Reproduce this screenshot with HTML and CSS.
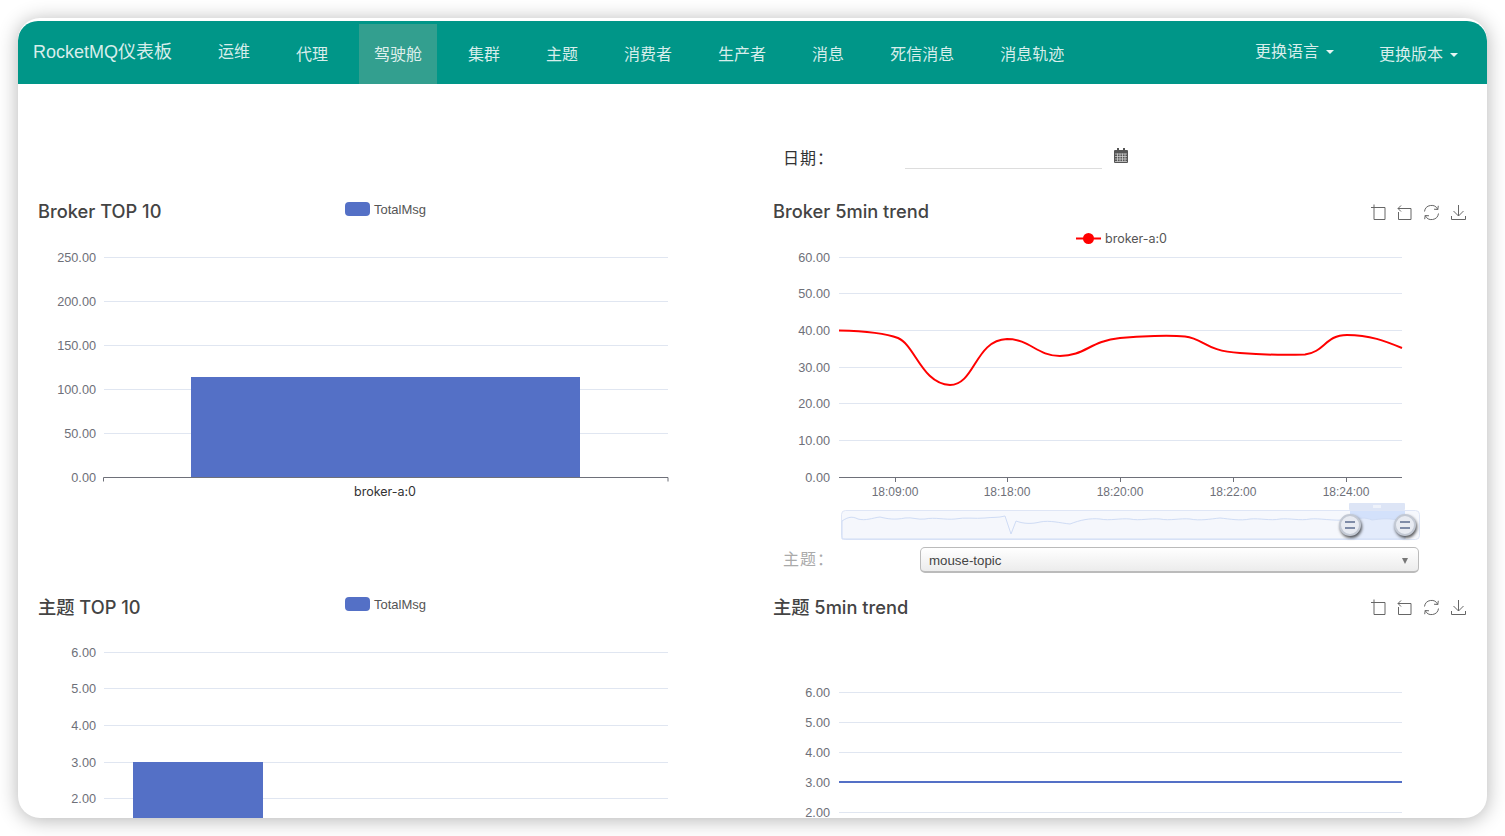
FILE: index.html
```html
<!DOCTYPE html>
<html lang="zh-CN">
<head>
<meta charset="utf-8">
<title>RocketMQ仪表板</title>
<link rel="stylesheet" href="styles.css">
</head>
<body>
<div class="window">
  <nav class="nav">
    <a class="brand raised">RocketMQ仪表板</a>
    <ul class="menu">
      <li class="raised">运维</li>
      <li>代理</li>
      <li class="active">驾驶舱</li>
      <li>集群</li>
      <li>主题</li>
      <li>消费者</li>
      <li>生产者</li>
      <li>消息</li>
      <li>死信消息</li>
      <li>消息轨迹</li>
    </ul>
    <ul class="menu menu-right">
      <li class="raised">更换语言<span class="caret"></span></li>
      <li>更换版本<span class="caret"></span></li>
    </ul>
  </nav>

  <main class="content">
    <div class="date-row">
      <label class="date-label">日期：</label>
      <div class="date-input"></div>
      <svg class="calendar" width="14" height="15" viewBox="0 0 14 15">
        <rect x="0" y="2" width="14" height="13" rx="1" fill="#555"/>
        <rect x="3" y="0" width="2" height="3" fill="#555"/>
        <rect x="9" y="0" width="2" height="3" fill="#555"/>
        <path d="M1 6h12M1 8.500h12M1 11h12M1 13.500h12M3.500 5.500v8M6 5.500v8M8.500 5.500v8M11 5.500v8" stroke="#ddd" stroke-width=".7" fill="none"/>
      </svg>
    </div>

    <div class="charts">
      <section class="panel">
        <header class="panel-head">
          <h4 class="panel-title">Broker TOP 10</h4>
          <div class="legend"><i class="swatch"></i>TotalMsg</div>
        </header>
        <svg class="chart chart-left" width="735" height="372" viewBox="18 223 735 372">
          <g class="grid">
            <path d="M104 257.500H668M104 301.500H668M104 345.500H668M104 389.500H668M104 433.500H668"/>
          </g>
          <g class="ylabels">
            <text x="96" y="262">250.00</text>
            <text x="96" y="306">200.00</text>
            <text x="96" y="350">150.00</text>
            <text x="96" y="394">100.00</text>
            <text x="96" y="438">50.00</text>
            <text x="96" y="482">0.00</text>
          </g>
          <rect class="bar" x="191" y="377" width="389" height="100"/>
          <path class="axis" d="M103.500 481.500V477.500H668V481.500"/>
          <text class="xlabel dark" x="385" y="496">broker-a:0</text>
        </svg>
      </section>

      <section class="panel">
        <header class="panel-head">
          <h4 class="panel-title">Broker 5min trend</h4>
          <div class="toolbox">
            <svg width="17" height="17" viewBox="0 0 17 17"><path d="M2 3.500H16V15.500H5V.5"/></svg>
            <svg width="17" height="17" viewBox="0 0 17 17"><path d="M2 4.500H15V15.500H2.500V8M5 1.500L2 4.500L5 7.500"/></svg>
            <svg width="17" height="17" viewBox="0 0 17 17"><path d="M1.500 7.500A7 7 0 0 1 14.800 5.500M14.800 5.500L15.300 1.800M14.800 5.500L11 5.200M15.500 9.500A7 7 0 0 1 2.200 11.500M2.200 11.500L1.700 15.200M2.200 11.500L6 11.800"/></svg>
            <svg width="17" height="17" viewBox="0 0 17 17"><path d="M8.500 1V12M3.500 7L8.500 12L13.500 7M1.500 12V15.500H15.500V12"/></svg>
          </div>
        </header>
        <svg class="chart chart-right" width="734" height="323" viewBox="753 223 734 323">
          <g class="legend-line">
            <path d="M1076 238.500H1101" stroke="#f00" stroke-width="2"/>
            <circle cx="1088.500" cy="238.500" r="5.500" fill="#f00"/>
            <text class="legend-text" x="1105" y="243">broker-a:0</text>
          </g>
          <g class="grid">
            <path d="M839 257.500H1402M839 293.500H1402M839 330.500H1402M839 367.500H1402M839 403.500H1402M839 440.500H1402"/>
          </g>
          <g class="ylabels">
            <text x="830" y="262">60.00</text>
            <text x="830" y="298">50.00</text>
            <text x="830" y="335">40.00</text>
            <text x="830" y="372">30.00</text>
            <text x="830" y="408">20.00</text>
            <text x="830" y="445">10.00</text>
            <text x="830" y="482">0.00</text>
          </g>
          <path class="axis" d="M839 477.500H1402M895.500 477.500V482M1007.500 477.500V482M1120.500 477.500V482M1233.500 477.500V482M1346.500 477.500V482"/>
          <g class="xlabels">
            <text x="895" y="496">18:09:00</text>
            <text x="1007" y="496">18:18:00</text>
            <text x="1120" y="496">18:20:00</text>
            <text x="1233" y="496">18:22:00</text>
            <text x="1346" y="496">18:24:00</text>
          </g>
          <path class="trend" d="M839 330.500C860 331 885 333 898 338C915 345 922 384 950 385C975 385 975 340 1007 339C1030 339 1037 356 1060 356C1085 356 1090 341 1120 338C1140 336 1170 335 1185 336.500C1205 339 1205 351 1240 353C1265 355 1290 355 1305 354.500C1325 352 1325 335 1347 335C1370 335 1385 341 1402 348"/>
          <g class="zoom">
            <rect class="zoom-track" x="841.500" y="510.500" width="578" height="29" rx="4"/>
            <rect class="zoom-sel" x="1350" y="511" width="55" height="28"/>
            <rect class="zoom-top" x="1349" y="503" width="56" height="7" rx="1"/>
            <path class="zoom-dots" d="M1374 505V508M1376 505V508M1378 505V508M1380 505V508"/>
            <path class="zoom-area" d="M842 530V521C848 517 852 516 858 519C866 521 872 518 880 517C888 519 895 520 905 518C912 517 918 520 925 519C935 517 945 520 955 519C965 517 975 519 985 518C992 517 998 518 1005 516L1011 534L1016 521C1024 524 1032 524 1040 522C1050 520 1060 523 1070 524C1080 520 1090 518 1100 519C1110 521 1120 518 1130 519C1140 521 1150 518 1160 519C1170 521 1180 518 1190 519C1200 521 1210 519 1220 518C1230 519 1240 521 1250 519C1260 518 1270 521 1280 519C1290 518 1300 521 1310 519C1320 518 1330 521 1350 520C1360 518 1365 517 1372 520C1380 519 1390 517 1405 522V539H842Z"/>
            <g class="zoom-handle" transform="translate(1350 525)">
              <circle class="knob" r="10"/>
              <path class="knob-lines" d="M-5 -3H5M-5 3H5"/>
            </g>
            <g class="zoom-handle" transform="translate(1405 525)">
              <circle class="knob" r="10"/>
              <path class="knob-lines" d="M-5 -3H5M-5 3H5"/>
            </g>
          </g>
        </svg>
        <div class="topic-row">
          <label class="topic-label">主题：</label>
          <div class="topic-select">mouse-topic<span class="select-arrow"></span></div>
        </div>
      </section>

      <section class="panel">
        <header class="panel-head">
          <h4 class="panel-title">主题 TOP 10</h4>
          <div class="legend"><i class="swatch"></i>TotalMsg</div>
        </header>
        <svg class="chart chart-left" width="735" height="200" viewBox="18 618 735 200">
          <g class="grid">
            <path d="M104 652.500H668M104 688.500H668M104 725.500H668M104 762.500H668M104 798.500H668"/>
          </g>
          <g class="ylabels">
            <text x="96" y="657">6.00</text>
            <text x="96" y="693">5.00</text>
            <text x="96" y="730">4.00</text>
            <text x="96" y="767">3.00</text>
            <text x="96" y="803">2.00</text>
          </g>
          <rect class="bar" x="133" y="762" width="130" height="56"/>
        </svg>
      </section>

      <section class="panel">
        <header class="panel-head">
          <h4 class="panel-title">主题 5min trend</h4>
          <div class="toolbox">
            <svg width="17" height="17" viewBox="0 0 17 17"><path d="M2 3.500H16V15.500H5V.5"/></svg>
            <svg width="17" height="17" viewBox="0 0 17 17"><path d="M2 4.500H15V15.500H2.500V8M5 1.500L2 4.500L5 7.500"/></svg>
            <svg width="17" height="17" viewBox="0 0 17 17"><path d="M1.500 7.500A7 7 0 0 1 14.800 5.500M14.800 5.500L15.300 1.800M14.800 5.500L11 5.200M15.500 9.500A7 7 0 0 1 2.200 11.500M2.200 11.500L1.700 15.200M2.200 11.500L6 11.800"/></svg>
            <svg width="17" height="17" viewBox="0 0 17 17"><path d="M8.500 1V12M3.500 7L8.500 12L13.500 7M1.500 12V15.500H15.500V12"/></svg>
          </div>
        </header>
        <svg class="chart chart-right" width="734" height="200" viewBox="753 618 734 200">
          <g class="grid">
            <path d="M839 692.500H1402M839 722.500H1402M839 752.500H1402M839 812.500H1402"/>
          </g>
          <g class="ylabels">
            <text x="830" y="697">6.00</text>
            <text x="830" y="727">5.00</text>
            <text x="830" y="757">4.00</text>
            <text x="830" y="787">3.00</text>
            <text x="830" y="816.500">2.00</text>
          </g>
          <path class="flat" d="M839 782H1402"/>
        </svg>
      </section>
    </div>
  </main>
</div>
</body>
</html>
```
FILE: styles.css
```css
* { box-sizing: border-box; }
html, body { height: 100%; }
body {
  margin: 0;
  padding: 18px;
  background: #fff;
  overflow: hidden;
  font-family: "Liberation Sans", "Noto Sans CJK SC", sans-serif;
  color: #333;
}
.window {
  width: 1469px;
  height: 800px;
  padding-top: 3px;
  background: #fff;
  border-radius: 22px;
  overflow: hidden;
  box-shadow: 0 2px 20px rgba(0, 0, 0, .3);
}
.nav {
  display: flex;
  height: 63px;
  padding-top: 3px;
  background: #009688;
  border-radius: 20px 20px 0 0;
  color: rgba(255, 255, 255, .85);
  font-size: 16px;
}
.brand {
  display: flex;
  align-items: center;
  width: 185px;
  padding-left: 15px;
  font-size: 18px;
}
.menu {
  display: flex;
  gap: 16px;
  margin: 0;
  padding: 0;
  list-style: none;
}
.menu li {
  display: flex;
  align-items: center;
  padding: 0 15px 2px;
}
.menu .active {
  background: #339f8f;
}
.raised { padding-bottom: 8px !important; }
.menu-right {
  gap: 15px;
  margin-left: auto;
  margin-right: 14px;
}
.caret {
  width: 0;
  height: 0;
  margin-left: 7px;
  margin-top: 3px;
  border-top: 4px solid rgba(255, 255, 255, .9);
  border-left: 4px solid transparent;
  border-right: 4px solid transparent;
}
.content { display: block; }
.date-row {
  display: flex;
  align-items: flex-start;
  height: 115px;
  padding: 64px 0 0 765px;
}
.date-label {
  width: 122px;
  padding-top: 1px;
  font-size: 16px;
  line-height: 20px;
  letter-spacing: 1px;
}
.date-input {
  width: 197px;
  height: 21px;
  border-bottom: 1px solid #ddd;
}
.calendar { margin: 0 0 0 12px; }
.charts {
  display: grid;
  grid-template-columns: 735px 734px;
  grid-auto-rows: 395px;
}
.panel { min-width: 0; }
.panel-head {
  display: flex;
  align-items: center;
  height: 24px;
  padding: 0 20px;
}
.panel-title {
  width: 307px;
  margin: 0;
  flex: none;
  font-family: Inter, "Noto Sans CJK SC", sans-serif;
  font-size: 18.250px;
  font-weight: 500;
  color: #444;
}
.legend {
  display: flex;
  align-items: center;
  gap: 4px;
  margin-top: -4px;
  font-size: 13px;
  color: #555;
}
.swatch {
  width: 25px;
  height: 14px;
  background: #5470c6;
  border-radius: 4px;
}
.toolbox {
  display: flex;
  gap: 10px;
  margin-left: auto;
  margin-top: 2px;
}
.toolbox svg {
  fill: none;
  stroke: #666;
  stroke-width: 1;
}
.chart { display: block; font-family: "Liberation Sans", sans-serif; }
.grid path { stroke: #e0e6f1; stroke-width: 1; fill: none; }
.axis { stroke: #6e7079; stroke-width: 1; fill: none; }
.ylabels text {
  font-size: 12.700px;
  fill: #6e7079;
  text-anchor: end;
}
.xlabels text, .xlabel {
  font-size: 12px;
  fill: #6e7079;
  text-anchor: middle;
}
.xlabel.dark { font-family: Inter, sans-serif; font-size: 12.500px; fill: #333; }
.legend-text { font-family: Inter, sans-serif; font-size: 12.500px; fill: #555; }
.bar { fill: #5470c6; }
.trend { fill: none; stroke: #f00; stroke-width: 2; }
.flat { fill: none; stroke: #5470c6; stroke-width: 2; }
.zoom-track { fill: #f6f8fd; stroke: #dfe6f6; stroke-width: 1; }
.zoom-sel { fill: #d3e1fb; }
.zoom-top { fill: #dde5f6; }
.zoom-dots { stroke: #fff; stroke-width: 1; }
.zoom-area { fill: #f3f5fc; fill-opacity: .5; stroke: #cfdcf5; stroke-width: 1; }
.zoom-handle { filter: drop-shadow(1.500px 2px 1.500px rgba(0, 0, 0, .65)); }
.knob { fill: #e8ebf2; stroke: #c3c9d4; stroke-width: 2; }
.knob-lines { stroke: #7f8ca8; stroke-width: 1.800; fill: none; }
.topic-row {
  display: flex;
  align-items: center;
  height: 28px;
  padding-left: 30px;
}
.topic-label {
  width: 137px;
  margin-top: -5px;
  font-size: 16px;
  letter-spacing: 1px;
  color: #aaa;
}
.topic-select {
  position: relative;
  width: 499px;
  height: 26px;
  padding-left: 8px;
  border: 1px solid #bbb;
  border-bottom-width: 2px;
  border-radius: 5px;
  background: linear-gradient(#fff, #ececec);
  font-size: 13.300px;
  line-height: 25px;
  color: #444;
}
.select-arrow {
  position: absolute;
  right: 10px;
  top: 10px;
  border-top: 6px solid #777;
  border-left: 3.500px solid transparent;
  border-right: 3.500px solid transparent;
}
```
